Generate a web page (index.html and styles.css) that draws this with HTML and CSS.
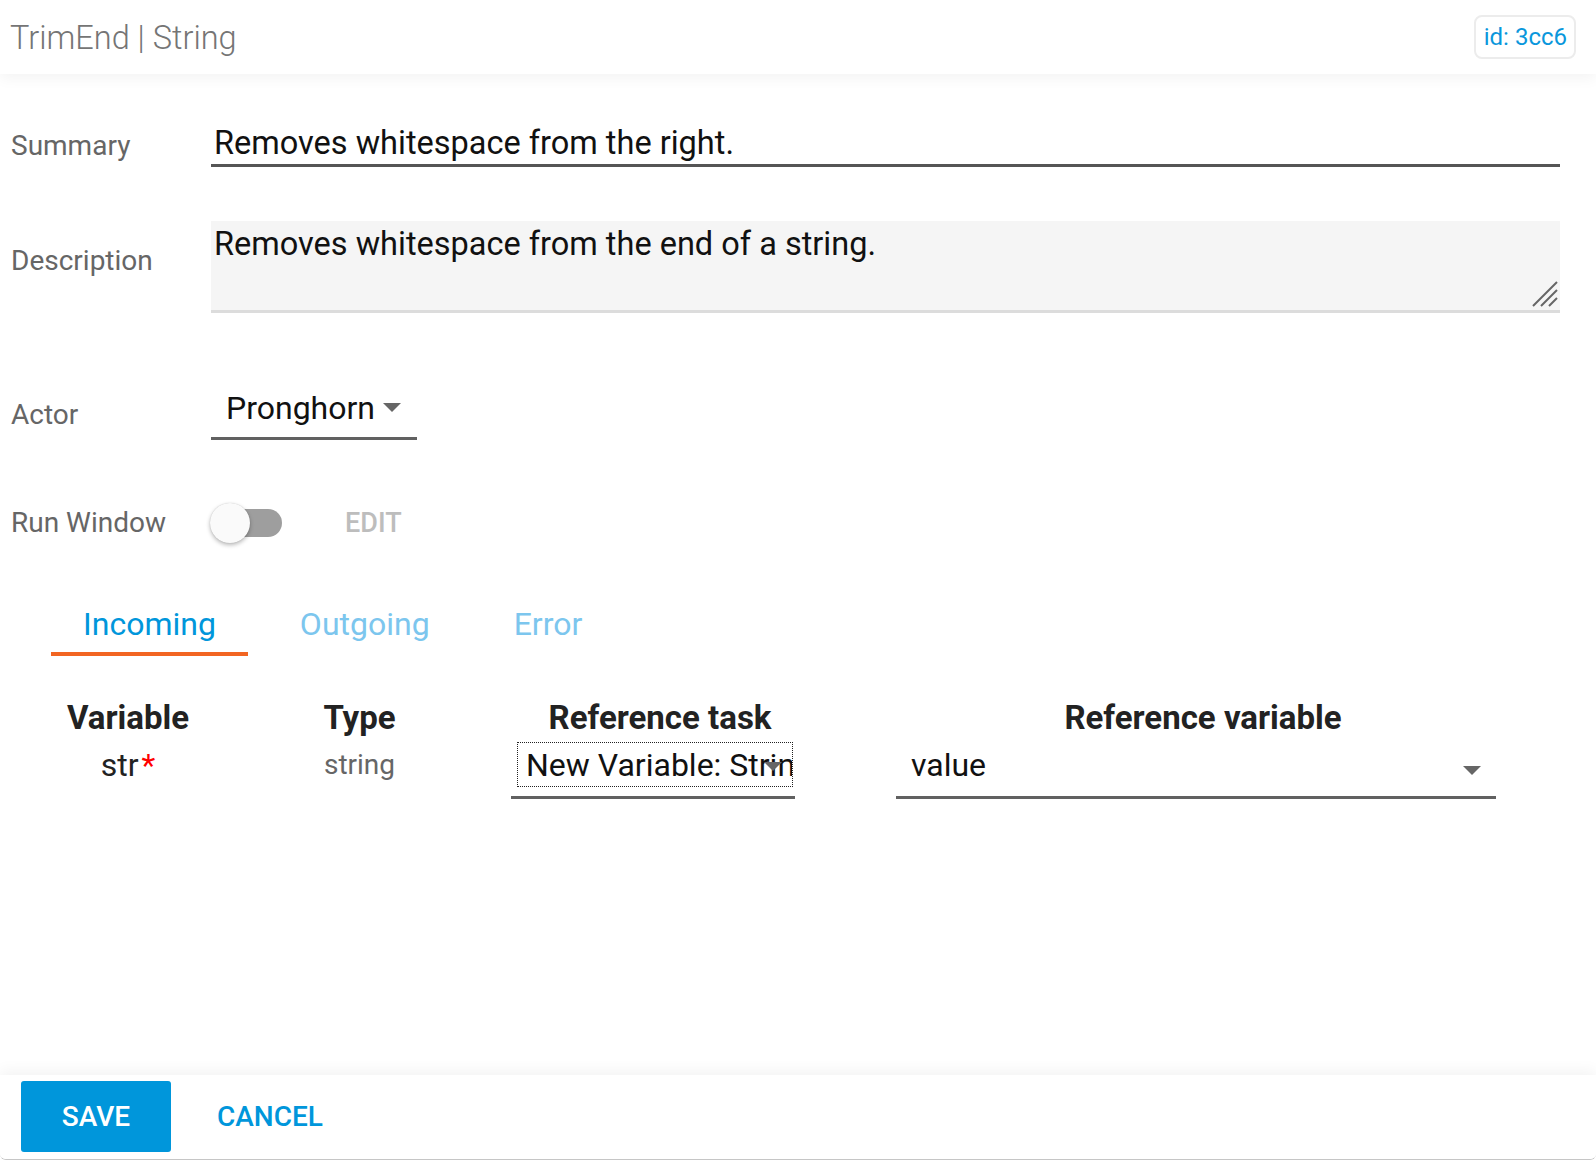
FILE: index.html
```html
<!DOCTYPE html>
<html>
<head>
<meta charset="utf-8">
<title>TrimEnd | String</title>
<link rel="stylesheet" href="styles.css">
</head>
<body>
<div class="dialog">
  <header class="head">
    <span class="title">TrimEnd | String</span>
    <span class="badge">id: 3cc6</span>
  </header>
  <main class="main">
    <div class="row row-summary">
      <div class="lbl">Summary</div>
      <div class="field line">Removes whitespace from the right.</div>
    </div>
    <div class="row row-desc">
      <div class="lbl lbl-desc">Description</div>
      <div class="field area">Removes whitespace from the end of a string.
        <svg class="grip" width="26" height="26" viewBox="0 0 26 26"><path d="M1 25 L25 1 M9 25 L25 9 M17 25 L25 17" stroke="#666" stroke-width="2" fill="none"/></svg>
      </div>
    </div>
    <div class="row row-actor">
      <div class="lbl">Actor</div>
      <div class="select actor">Pronghorn<svg class="caret-inline" width="18" height="9" viewBox="0 0 18 9"><polygon points="0,0 18,0 9,9" fill="#666"/></svg></div>
    </div>
    <div class="row row-run">
      <div class="lbl">Run Window</div>
      <div class="toggle"><span class="track"></span><span class="thumb"></span></div>
      <div class="edit">EDIT</div>
    </div>
    <nav class="tabs">
      <div class="tab active">Incoming</div>
      <div class="tab">Outgoing</div>
      <div class="tab">Error</div>
    </nav>
    <div class="table">
      <div class="th">Variable</div>
      <div class="th">Type</div>
      <div class="th">Reference task</div>
      <div class="th">Reference variable</div>
      <div class="td td-var">str<span class="req">*</span></div>
      <div class="td muted">string</div>
      <div class="td td-sel">
        <div class="select ref-task">
          <div class="focus">New Variable: String</div>
          <svg class="caret" width="18" height="9" viewBox="0 0 18 9"><polygon points="0,0 18,0 9,9" fill="#666"/></svg>
        </div>
      </div>
      <div class="td td-sel">
        <div class="select ref-var">value
          <svg class="caret" width="18" height="9" viewBox="0 0 18 9"><polygon points="0,0 18,0 9,9" fill="#666"/></svg>
        </div>
      </div>
    </div>
  </main>
  <footer class="foot">
    <div class="btn save">SAVE</div>
    <div class="btn cancel">CANCEL</div>
  </footer>
</div>
</body>
</html>
```
FILE: styles.css
```css
html, body {
  margin: 0;
  padding: 0;
  background: #fff;
}
body {
  font-family: Roboto, "Noto Sans", "Liberation Sans", sans-serif;
  color: #111;
}
.dialog {
  width: 1596px;
  height: 1160px;
  display: flex;
  flex-direction: column;
  overflow: hidden;
  box-sizing: border-box;
  border-bottom: 1px solid #c6c6c6;
  border-radius: 0 0 6px 6px;
}
.head {
  height: 74px;
  flex: none;
  display: flex;
  align-items: center;
  justify-content: space-between;
  padding: 0 20px 0 10px;
  box-shadow: 0 4px 14px rgba(0, 0, 0, 0.05);
  position: relative;
  z-index: 1;
  background: #fff;
}
.title {
  font-size: 32.5px;
  font-weight: 300;
  color: #757575;
  line-height: 38px;
  position: relative;
  top: 1px;
}
.badge {
  font-size: 24px;
  color: #0a97dc;
  border: 2px solid #ececec;
  border-radius: 8px;
  height: 44px;
  box-sizing: border-box;
  padding: 0 7px 0 8px;
  display: flex;
  align-items: center;
}
.main {
  flex: 1;
  padding: 50px 0 0 11px;
}
.row {
  display: flex;
  align-items: center;
  margin-right: 36px;
}
.lbl {
  width: 200px;
  flex: none;
  font-size: 28px;
  line-height: 34px;
  color: #666;
}
.field {
  flex: 1;
  font-size: 32.5px;
  line-height: 38px;
  color: #111;
}
.line {
  padding: 0 3px 2px;
  border-bottom: 3px solid #555;
}
.row-desc {
  margin-top: 54px;
  align-items: flex-start;
}
.lbl-desc {
  margin-top: 23px;
}
.area {
  position: relative;
  height: 92px;
  box-sizing: border-box;
  padding: 4px 3px;
  background: #f5f5f5;
  border-bottom: 3px solid #dcdcdc;
}
.grip {
  position: absolute;
  right: 2px;
  bottom: 3px;
}
.row-actor {
  margin-top: 76px;
}
.select {
  font-size: 32px;
  line-height: 38px;
  color: #111;
  position: relative;
  box-sizing: border-box;
}
.actor {
  width: 206px;
  flex: none;
  padding: 0 0 10px 15px;
  border-bottom: 3px solid #616161;
}
.caret-inline {
  margin-left: 8px;
  vertical-align: middle;
  position: relative;
  top: -3px;
}
.row-run {
  margin-top: 63px;
}
.toggle {
  width: 72px;
  height: 40px;
  flex: none;
  position: relative;
}
.track {
  position: absolute;
  left: 3px;
  top: 6px;
  width: 68px;
  height: 28px;
  border-radius: 14px;
  background: #9e9e9e;
}
.thumb {
  position: absolute;
  left: -1px;
  top: 0;
  width: 40px;
  height: 40px;
  border-radius: 50%;
  background: #fafafa;
  box-shadow: 0 2px 4px rgba(0, 0, 0, 0.28), 0 0 1px rgba(0, 0, 0, 0.2);
}
.edit {
  margin-left: 62px;
  font-size: 27px;
  font-weight: 500;
  color: #bdbdbd;
  line-height: 34px;
}
.tabs {
  display: flex;
  margin: 62px 0 0 40px;
}
.tab {
  font-size: 32px;
  line-height: 38px;
  padding: 0 32px 9px;
  border-bottom: 4px solid transparent;
  margin-right: 20px;
  color: #7cc6ee;
}
.tab.active {
  color: #0096db;
  border-bottom-color: #f26522;
}
.table {
  display: grid;
  grid-template-columns: 154px 309px 292px 794px;
  row-gap: 9px;
  margin: 43px 0 0 40px;
  align-items: start;
}
.th {
  font-size: 33px;
  font-weight: 700;
  line-height: 38px;
  text-align: center;
  color: #222;
}
.td {
  font-size: 28px;
  line-height: 38px;
  text-align: center;
  color: #222;
}
.td-var {
  font-size: 32px;
}
.td.muted {
  color: #666;
}
.req {
  color: #f00;
  margin-left: 3px;
}
.td-sel {
  text-align: left;
}
.ref-task {
  margin-left: -3px;
  width: 284px;
  padding-bottom: 9px;
  border-bottom: 3px solid #616161;
}
.focus {
  margin: -4px 0 0 6px;
  width: 276px;
  box-sizing: border-box;
  border: 1px dotted #222;
  padding: 3px 0 2px 8px;
  white-space: nowrap;
  overflow: hidden;
}
.caret {
  position: absolute;
  top: 20px;
}
.ref-task .caret {
  right: 13px;
}
.ref-var {
  margin-left: 90px;
  width: 600px;
  padding: 0 0 12px 15px;
  border-bottom: 3px solid #616161;
}
.ref-var .caret {
  right: 15px;
}
.foot {
  height: 84px;
  flex: none;
  display: flex;
  align-items: flex-start;
  padding: 6px 21px 0;
  box-sizing: border-box;
  box-shadow: 0 -4px 14px rgba(0, 0, 0, 0.05);
  position: relative;
  background: #fff;
}
.btn {
  height: 71px;
  display: flex;
  align-items: center;
  justify-content: center;
  font-size: 28px;
  font-weight: 500;
}
.save {
  width: 150px;
  background: #0096db;
  color: #fff;
  border-radius: 3px;
}
.cancel {
  margin-left: 46px;
  color: #0096db;
}
```
